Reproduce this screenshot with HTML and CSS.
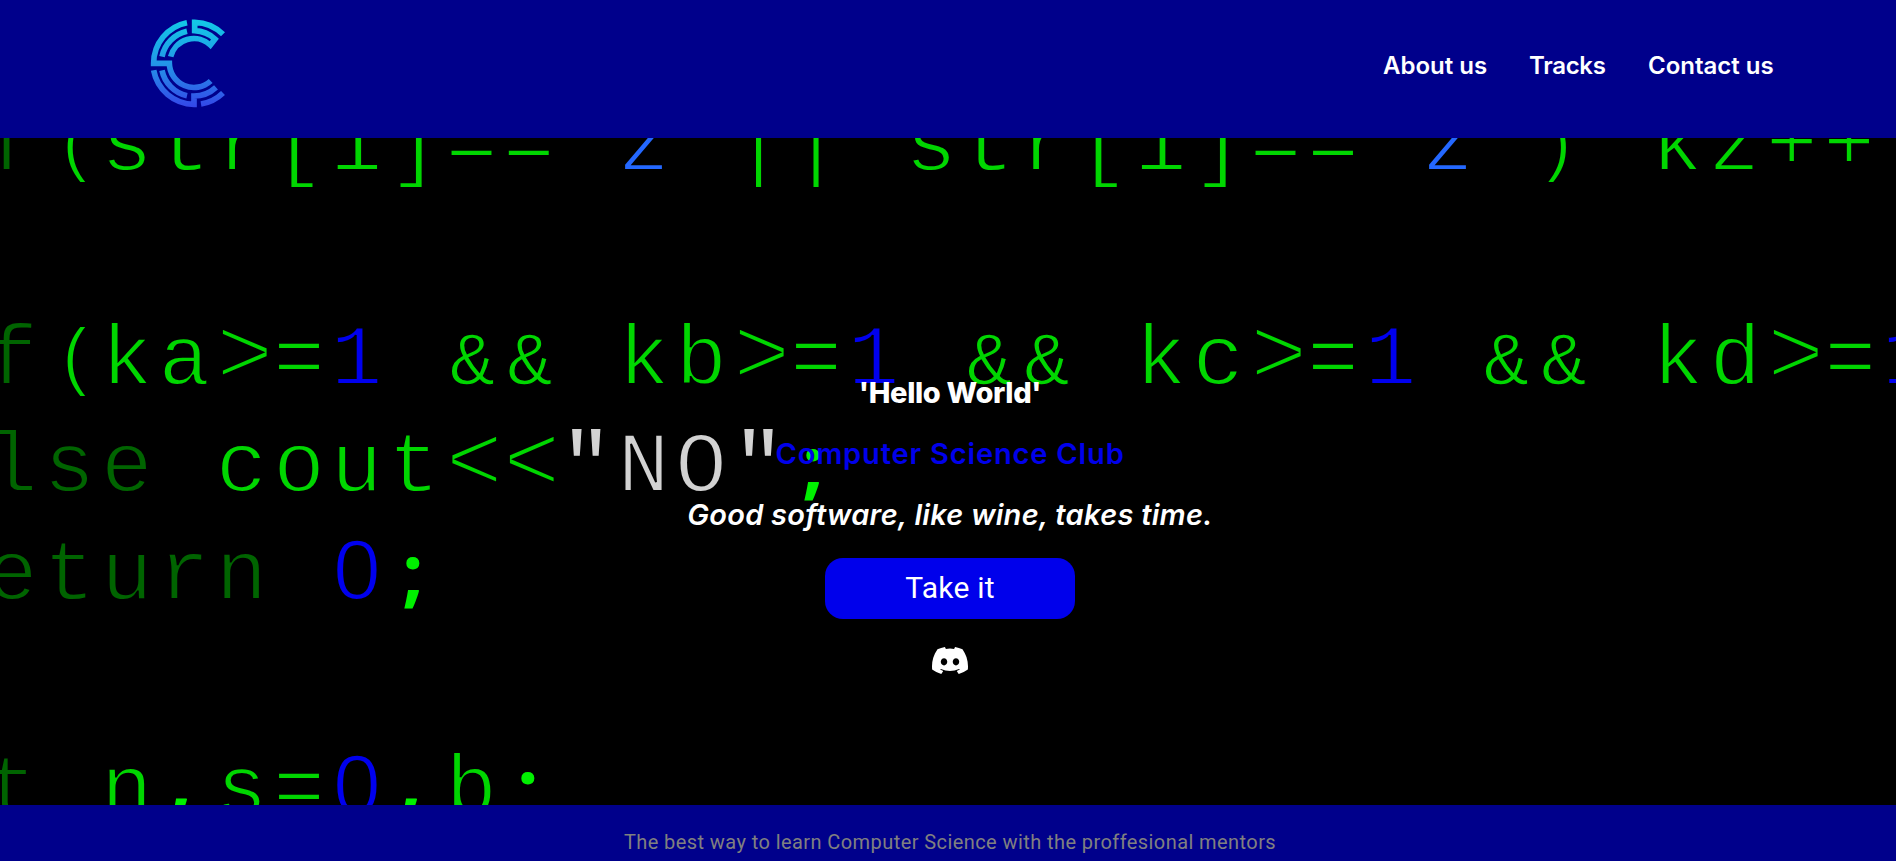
FILE: index.html
```html
<!DOCTYPE html>
<html lang="en">
<head>
<meta charset="utf-8">
<title>Computer Science Club</title>
<link rel="stylesheet" href="styles.css">
</head>
<body>
<header class="header">
  <a class="logo" href="#">
    <svg width="120" height="138" viewBox="0 0 360 414" fill="none" stroke="url(#lg)" stroke-width="17">
      <defs><linearGradient id="lg" gradientUnits="userSpaceOnUse" x1="0" y1="58" x2="0" y2="322"><stop offset="0" stop-color="#12cbe6"/><stop offset=".5" stop-color="#2396e8"/><stop offset="1" stop-color="#3446e8"/></linearGradient></defs>
      <path d="M171 68A124 124 0 0 0 71 190H118A74 74 0 0 0 242 243"/>
      <path d="M171 94A98 98 0 0 0 96 170"/>
      <path d="M122 170A72 72 0 0 1 241 135L255 117A98 98 0 0 0 194 92V67A124 124 0 0 1 279 103"/>
      <path d="M71 211A124 124 0 0 0 192 313V288A98 98 0 0 0 258 262"/>
      <path d="M96 211A98 98 0 0 0 171 287"/>
      <path d="M213 312A124 124 0 0 0 279 279"/>
    </svg>
  </a>
  <nav class="nav">
    <a class="about" href="#">About us</a>
    <a class="tracks" href="#">Tracks</a>
    <a class="contact" href="#">Contact us</a>
  </nav>
</header>
<main class="hero">
  <svg class="code" width="1896" height="667" viewBox="0 138 1896 667" aria-hidden="true">
    <text x="-14" y="170"><tspan class="kw">f</tspan><tspan class="paren" x="54" y="167">(</tspan><tspan x="101" y="170">str[i]==</tspan><tspan class="ch">'z'</tspan>|| str[i]==<tspan class="ch">'z'</tspan><tspan class="paren" x="1534" y="167">)</tspan><tspan x="1651" y="170">kz++;</tspan></text>
    <text x="-14" y="384"><tspan class="kw">f</tspan><tspan class="paren" x="54" y="381">(</tspan><tspan x="101" y="384">ka</tspan><tspan class="op">&gt;</tspan>=<tspan class="num">1</tspan> <tspan class="amp" dx="4">&amp;</tspan><tspan class="amp">&amp;</tspan><tspan dx="-4"> </tspan>kb<tspan class="op">&gt;</tspan>=<tspan class="num">1</tspan> <tspan class="amp" dx="4">&amp;</tspan><tspan class="amp">&amp;</tspan><tspan dx="-4"> </tspan>kc<tspan class="op">&gt;</tspan>=<tspan class="num">1</tspan> <tspan class="amp" dx="4">&amp;</tspan><tspan class="amp">&amp;</tspan><tspan dx="-4"> </tspan>kd<tspan class="op">&gt;</tspan>=<tspan class="num">1</tspan></text>
    <text x="-14" y="491"><tspan class="kw">lse</tspan> cout<tspan class="op">&lt;&lt;</tspan><tspan class="str"><tspan class="b">"</tspan>NO<tspan class="b">"</tspan></tspan><tspan class="semi" x="802">;</tspan></text>
    <text x="-14" y="599"><tspan class="kw">eturn</tspan> <tspan class="zero" x="333">0</tspan><tspan class="semi" x="402">;</tspan></text>
    <text x="-14" y="814"><tspan class="kw">t</tspan> n<tspan class="semi" x="170" y="807">,</tspan><tspan x="215.7" y="814">s=</tspan><tspan class="zero" x="333">0</tspan><tspan class="semi" x="400" y="807">,</tspan><tspan x="445.4" y="814">b</tspan><tspan class="semi" x="517">;</tspan></text>
  </svg>
  <h1 class="hello">'Hello World'</h1>
  <h2 class="club">Computer Science Club</h2>
  <p class="quote">Good software, like wine, takes time.</p>
  <button class="btn">Take it</button>
  <a class="discord" href="#" aria-label="Discord">
    <svg width="36" height="27" viewBox="0 0 127.14 96.36" preserveAspectRatio="none"><path fill="#fff" d="M107.7 8.07A105.15 105.15 0 0 0 81.47 0a72.06 72.06 0 0 0-3.36 6.83 97.68 97.68 0 0 0-29.11 0A72.37 72.37 0 0 0 45.64 0a105.89 105.89 0 0 0-26.25 8.09C2.79 32.65-1.71 56.6.54 80.21a105.73 105.73 0 0 0 32.17 16.15 77.7 77.7 0 0 0 6.89-11.11 68.42 68.42 0 0 1-10.85-5.18c.91-.66 1.8-1.34 2.66-2a75.57 75.57 0 0 0 64.32 0c.87.71 1.76 1.39 2.66 2a68.68 68.68 0 0 1-10.87 5.19 77 77 0 0 0 6.89 11.1 105.25 105.25 0 0 0 32.19-16.14c2.64-27.38-4.51-51.11-18.9-72.15ZM42.45 65.69C36.18 65.69 31 60 31 53s5-12.74 11.43-12.74S54 46 53.89 53s-5.05 12.69-11.44 12.69Zm42.24 0C78.41 65.69 73.25 60 73.25 53s5-12.74 11.44-12.74S96.23 46 96.12 53s-5.04 12.69-11.43 12.69Z"/></svg>
  </a>
</main>
<footer class="footer"><p class="tagline">The best way to learn Computer Science with the proffesional mentors</p></footer>
</body>
</html>
```

FILE: styles.css
```css
* { box-sizing: border-box; margin: 0; padding: 0; }
body { height: 861px; display: flex; flex-direction: column; overflow: hidden; background: #000; font-family: Inter, Roboto, sans-serif; }
.header { height: 138px; flex: none; background: #00008b; display: flex; justify-content: space-between; padding: 0 122px 0 130px; }
.logo svg { display: block; }
.nav { display: flex; gap: 43px; padding-top: 51px; }
.nav a { color: #fff; font-size: 24px; line-height: 29px; height: 30px; font-weight: 600; text-decoration: none; white-space: nowrap; }
.nav .about { width: 103px; }
.nav .tracks { width: 76px; letter-spacing: -.3px; }
.nav .contact { width: 126px; }

.hero { position: relative; height: 667px; flex: none; overflow: hidden; display: flex; flex-direction: column; align-items: center; padding: 237px 0 0 4px; color: #fff; }
.hero > * { position: relative; flex: none; white-space: nowrap; }
.hero > .code { position: absolute; left: 0; top: 0; }
.code text { font-family: "Liberation Mono", monospace; font-size: 86px; letter-spacing: 5.83px; fill: #00d600; stroke: #000; stroke-width: 1.9px; white-space: pre; }
.code .kw { fill: #006400; }
.code .ch { fill: #2468ff; }
.code .num { fill: #00e; }
.code .zero { fill: #00e; font-family: "Liberation Sans", sans-serif; letter-spacing: 0; }
.code .str { fill: #d2d2d2; }
.code .b { stroke-width: 0; }
.code .paren { font-size: 76px; }
.code .op { font-size: 96px; letter-spacing: -.18px; stroke-width: 3px; }
.code .amp { font-size: 76px; letter-spacing: 11.83px; stroke-width: 1.3px; }
.code .semi { fill: #00f000; stroke-width: 0; font-family: "Noto Sans", sans-serif; font-size: 76px; font-weight: 700; }

.hello, .club, .quote { font-size: 29px; line-height: 36px; margin-bottom: 25px; }
.hello { font-weight: 800; letter-spacing: -.35px; }
.club { font-weight: 600; color: #0000eb; letter-spacing: .85px; }
.quote { font-weight: 600; font-style: italic; letter-spacing: .27px; }
.btn { width: 250px; height: 61px; border: 0; border-radius: 18px; background: #0000eb; color: #fff; font: 400 30px/36px Roboto, sans-serif; letter-spacing: .2px; padding-bottom: 2px; }
.discord { margin-top: 28px; height: 27px; }
.discord svg { display: block; }
.footer { height: 56px; flex: none; background: #00008b; padding: 25px 0 0 4px; text-align: center; }
.tagline { font-family: Roboto, sans-serif; font-size: 20px; line-height: 24px; color: #808080; letter-spacing: .42px; }
```
